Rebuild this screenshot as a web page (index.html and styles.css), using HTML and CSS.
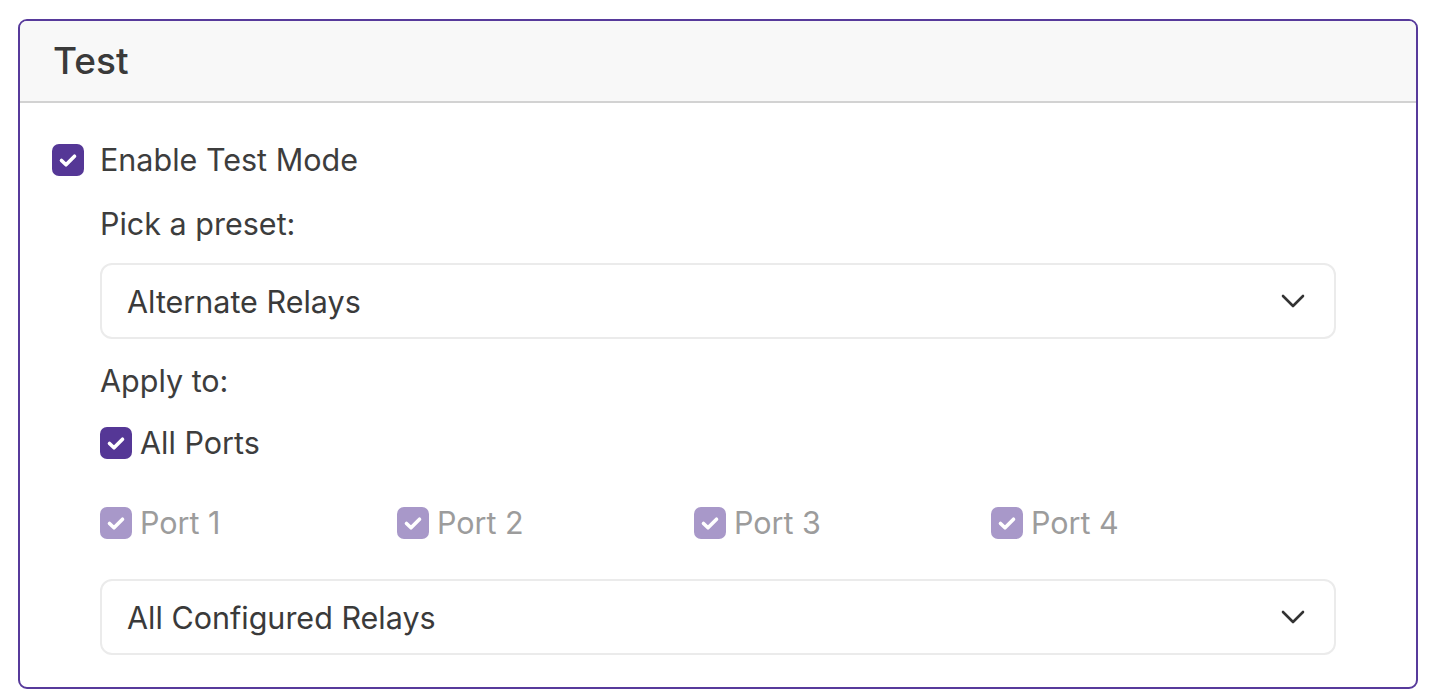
FILE: index.html
```html
<!DOCTYPE html>
<html>
<head>
<meta charset="utf-8">
<link rel="stylesheet" href="styles.css">
</head>
<body>
<div class="card">
  <div class="card-header">Test</div>
  <div class="card-body">
    <label class="check check-main">
      <span class="box"><svg viewBox="0 0 32 32"><path d="M9.5 16.5l4.5 4.3 8.5-8.6"/></svg></span>
      <span class="check-text">Enable Test Mode</span>
    </label>
    <div class="indent">
      <div class="label label-preset">Pick a preset:</div>
      <div class="select">
        <span>Alternate Relays</span>
        <svg class="chev" viewBox="0 0 24 14"><path d="M2 2l10 10 10-10"/></svg>
      </div>
      <div class="label label-apply">Apply to:</div>
      <label class="check check-all">
        <span class="box"><svg viewBox="0 0 32 32"><path d="M9.5 16.5l4.5 4.3 8.5-8.6"/></svg></span>
        <span class="check-text">All Ports</span>
      </label>
      <div class="ports">
        <label class="check disabled">
          <span class="box"><svg viewBox="0 0 32 32"><path d="M9.5 16.5l4.5 4.3 8.5-8.6"/></svg></span>
          <span class="check-text">Port 1</span>
        </label>
        <label class="check disabled">
          <span class="box"><svg viewBox="0 0 32 32"><path d="M9.5 16.5l4.5 4.3 8.5-8.6"/></svg></span>
          <span class="check-text">Port 2</span>
        </label>
        <label class="check disabled">
          <span class="box"><svg viewBox="0 0 32 32"><path d="M9.5 16.5l4.5 4.3 8.5-8.6"/></svg></span>
          <span class="check-text">Port 3</span>
        </label>
        <label class="check disabled">
          <span class="box"><svg viewBox="0 0 32 32"><path d="M9.5 16.5l4.5 4.3 8.5-8.6"/></svg></span>
          <span class="check-text">Port 4</span>
        </label>
      </div>
      <div class="select select-relays">
        <span>All Configured Relays</span>
        <svg class="chev" viewBox="0 0 24 14"><path d="M2 2l10 10 10-10"/></svg>
      </div>
    </div>
  </div>
</div>
</body>
</html>
```

FILE: styles.css
```css
html, body {
  margin: 0;
  padding: 0;
  background: #ffffff;
}
body {
  font-family: Inter, "Noto Sans", "Liberation Sans", sans-serif;
  color: #3d3d3d;
  font-size: 30.5px;
}
.card {
  margin: 19px 0 0 18px;
  width: 1396px;
  border: 2px solid #573a9b;
  border-radius: 9px;
  overflow: hidden;
}
.card-header {
  height: 80px;
  background: #f8f8f8;
  border-bottom: 2px solid #d2d2d2;
  padding-left: 33px;
  font-size: 37px;
  font-weight: 500;
  line-height: 80px;
  color: #3a3a3a;
}
.card-body {
  padding: 40px 32px 32px 32px;
}
.check {
  display: flex;
  align-items: center;
  height: 34px;
  line-height: 34px;
}
.box {
  width: 32px;
  height: 32px;
  border-radius: 7px;
  background: #553796;
  display: flex;
  align-items: center;
  justify-content: center;
  flex: none;
}
.box svg {
  display: block;
  width: 32px;
  height: 32px;
  min-width: 32px;
  fill: none;
  stroke: #ffffff;
  stroke-width: 3.6;
  stroke-linecap: round;
  stroke-linejoin: round;
}
.check-main .check-text {
  margin-left: 16px;
}
.check-all .check-text,
.disabled .check-text {
  margin-left: 8px;
}
.disabled .box {
  background: #a898c9;
}
.disabled .check-text {
  color: #9c9c9c;
}
.indent {
  margin: 0 48px;
}
.label {
  height: 34px;
  line-height: 34px;
}
.label-preset {
  margin-top: 30px;
}
.select {
  margin-top: 22px;
  height: 72px;
  border: 2px solid #ebebeb;
  border-radius: 12px;
  display: flex;
  align-items: center;
  justify-content: space-between;
  padding: 0 29px 0 25px;
  color: #3a3a3a;
}
.chev {
  width: 24px;
  height: 14px;
  fill: none;
  stroke: #333333;
  stroke-width: 2.6;
  stroke-linecap: round;
  stroke-linejoin: round;
}
.label-apply {
  margin-top: 25px;
}
.check-all {
  margin-top: 28px;
}
.ports {
  margin-top: 46px;
  display: grid;
  grid-template-columns: repeat(4, 297px);
}
.select-relays {
  margin-top: 39px;
}
```
